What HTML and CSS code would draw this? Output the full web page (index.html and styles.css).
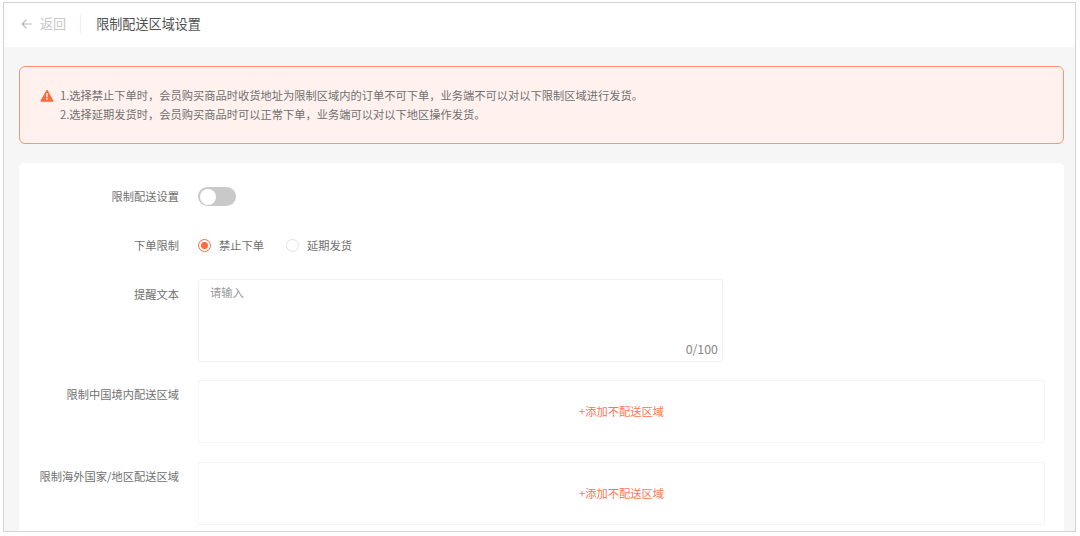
FILE: index.html
```html
<!DOCTYPE html>
<html lang="zh-CN">
<head>
  <meta charset="UTF-8">
  <title>限制配送区域设置</title>
  <meta name="viewport" content="width=device-width, initial-scale=1.0">
  <link rel="stylesheet" href="styles.css">
</head>
<body>

  <div class="page">

    <!-- Header -->
    <header class="header">
      <a class="back">
        <svg class="back-icon" viewBox="0 0 12 12">
          <path d="M11 6H1.5M5.5 1.7L1.2 6l4.3 4.3" />
        </svg>
        <span>返回</span>
      </a>
      <h1 class="title">限制配送区域设置</h1>
    </header>

    <main class="content">

      <!-- Notice -->
      <div class="notice">
        <svg class="notice-icon" viewBox="0 0 14 13">
          <path class="triangle" d="M7 1L13.2 12.2H.8z" />
          <path class="mark" d="M7 4.2v4M7 9.3v1.5" />
        </svg>
        <div class="notice-text">
          <p>1.选择禁止下单时，会员购买商品时收货地址为限制区域内的订单不可下单，业务端不可以对以下限制区域进行发货。</p>
          <p>2.选择延期发货时，会员购买商品时可以正常下单，业务端可以对以下地区操作发货。</p>
        </div>
      </div>

      <!-- Settings form -->
      <form class="card">
        <div class="row row-switch">
          <div class="label">限制配送设置</div>
          <div class="switch"></div>
        </div>

        <div class="row row-radio">
          <div class="label">下单限制</div>
          <div class="radios">
            <label class="radio"><span class="dot checked"></span>禁止下单</label>
            <label class="radio"><span class="dot"></span>延期发货</label>
          </div>
        </div>

        <div class="row row-text">
          <div class="label">提醒文本</div>
          <div class="textarea">
            <span class="placeholder">请输入</span>
            <span class="count">0/100</span>
          </div>
        </div>

        <div class="row row-area">
          <div class="label">限制中国境内配送区域</div>
          <div class="area"><a class="add">+添加不配送区域</a></div>
        </div>

        <div class="row row-area">
          <div class="label">限制海外国家/地区配送区域</div>
          <div class="area"><a class="add">+添加不配送区域</a></div>
        </div>
      </form>

    </main>
  </div>

</body>
</html>
```

FILE: styles.css
```css
:root {
  --accent: #ff6a3d;
  --text: #707070;
  --border: #f5f5f5;
}

* {
  box-sizing: border-box;
}

body {
  margin: 0;
  padding: 2px 4px 4px 3px;
  height: 536px;
  overflow: hidden;
  background: #fff;
  color: var(--text);
  font-family: "Noto Sans CJK SC", sans-serif;
  font-size: 11.25px;
  line-height: 20px;
}

.page {
  display: flex;
  flex-direction: column;
  height: 530px;
  border: 1px solid #d4d4d4;
  background: #f6f6f6;
  overflow: hidden;
}

.header {
  display: flex;
  align-items: center;
  flex: none;
  height: 44px;
  padding: 0 0 2px 17px;
  background: #fff;
}

.back {
  display: flex;
  align-items: center;
  gap: 7px;
  height: 18px;
  padding-right: 14px;
  border-right: 1px solid #efefef;
  color: #c8c8c8;
  font-size: 13.1px;
}

.back-icon {
  width: 12px;
  height: 12px;
  fill: none;
  stroke: #bbb;
  stroke-width: 1.2;
}

.title {
  margin: 0 0 0 15px;
  color: #505050;
  font-size: 13.1px;
  font-weight: 400;
}

.content {
  display: flex;
  flex-direction: column;
  flex: 1;
  gap: 19px;
  padding: 19px 11px 0 15px;
}

.notice {
  display: flex;
  flex: none;
  gap: 6px;
  height: 78px;
  padding: 19px 19px 0 20px;
  border: 1px solid #ff9272;
  border-radius: 6px;
  background: #fff2ee;
}

.notice-icon {
  width: 14px;
  height: 13px;
  margin-top: 3px;
}

.triangle {
  fill: var(--accent);
  stroke: var(--accent);
  stroke-width: 1;
  stroke-linejoin: round;
}

.mark {
  stroke: #fff;
  stroke-width: 1.4;
}

.notice-text p {
  margin: 0;
  line-height: 19.3px;
}

.card {
  flex: 1;
  padding: 23px 19px 0 0;
  border-radius: 5px 5px 0 0;
  background: #fff;
}

.row {
  display: flex;
  gap: 19px;
}

.label {
  flex: none;
  width: 160px;
  text-align: right;
}

.row-switch {
  height: 49px;
}

.switch {
  width: 38px;
  height: 19px;
  margin-top: 1px;
  border-radius: 10px;
  background: #c9c9c9;
}

.switch::before {
  content: "";
  display: block;
  width: 16px;
  height: 16px;
  margin: 1.5px;
  border-radius: 50%;
  background: #fff;
}

.row-radio {
  height: 44px;
}

.radios {
  display: flex;
  gap: 22px;
}

.radio {
  display: flex;
  align-items: center;
  gap: 8px;
  height: 20px;
}

.dot {
  display: flex;
  align-items: center;
  justify-content: center;
  width: 13px;
  height: 13px;
  border: 1px solid #e3e3e3;
  border-radius: 50%;
}

.dot.checked {
  border-color: var(--accent);
}

.dot.checked::before {
  content: "";
  width: 7px;
  height: 7px;
  border-radius: 50%;
  background: var(--accent);
}

.row-text {
  height: 101px;
}

.row-text .label {
  padding-top: 5px;
}

.textarea {
  display: flex;
  flex-direction: column;
  justify-content: space-between;
  width: 525px;
  height: 83px;
  padding: 2px 4px 2px 11px;
  border: 1px solid #efefef;
  border-radius: 3px;
}

.placeholder {
  color: #999;
}

.count {
  align-self: flex-end;
  color: #888;
  font-size: 12.4px;
}

.row-area {
  height: 82px;
}

.row-area .label {
  padding-top: 4px;
}

.area {
  display: flex;
  align-items: center;
  justify-content: center;
  flex: 1;
  height: 63px;
  padding-bottom: 2px;
  border: 1px solid var(--border);
}

.add {
  color: #ff7450;
}
```
